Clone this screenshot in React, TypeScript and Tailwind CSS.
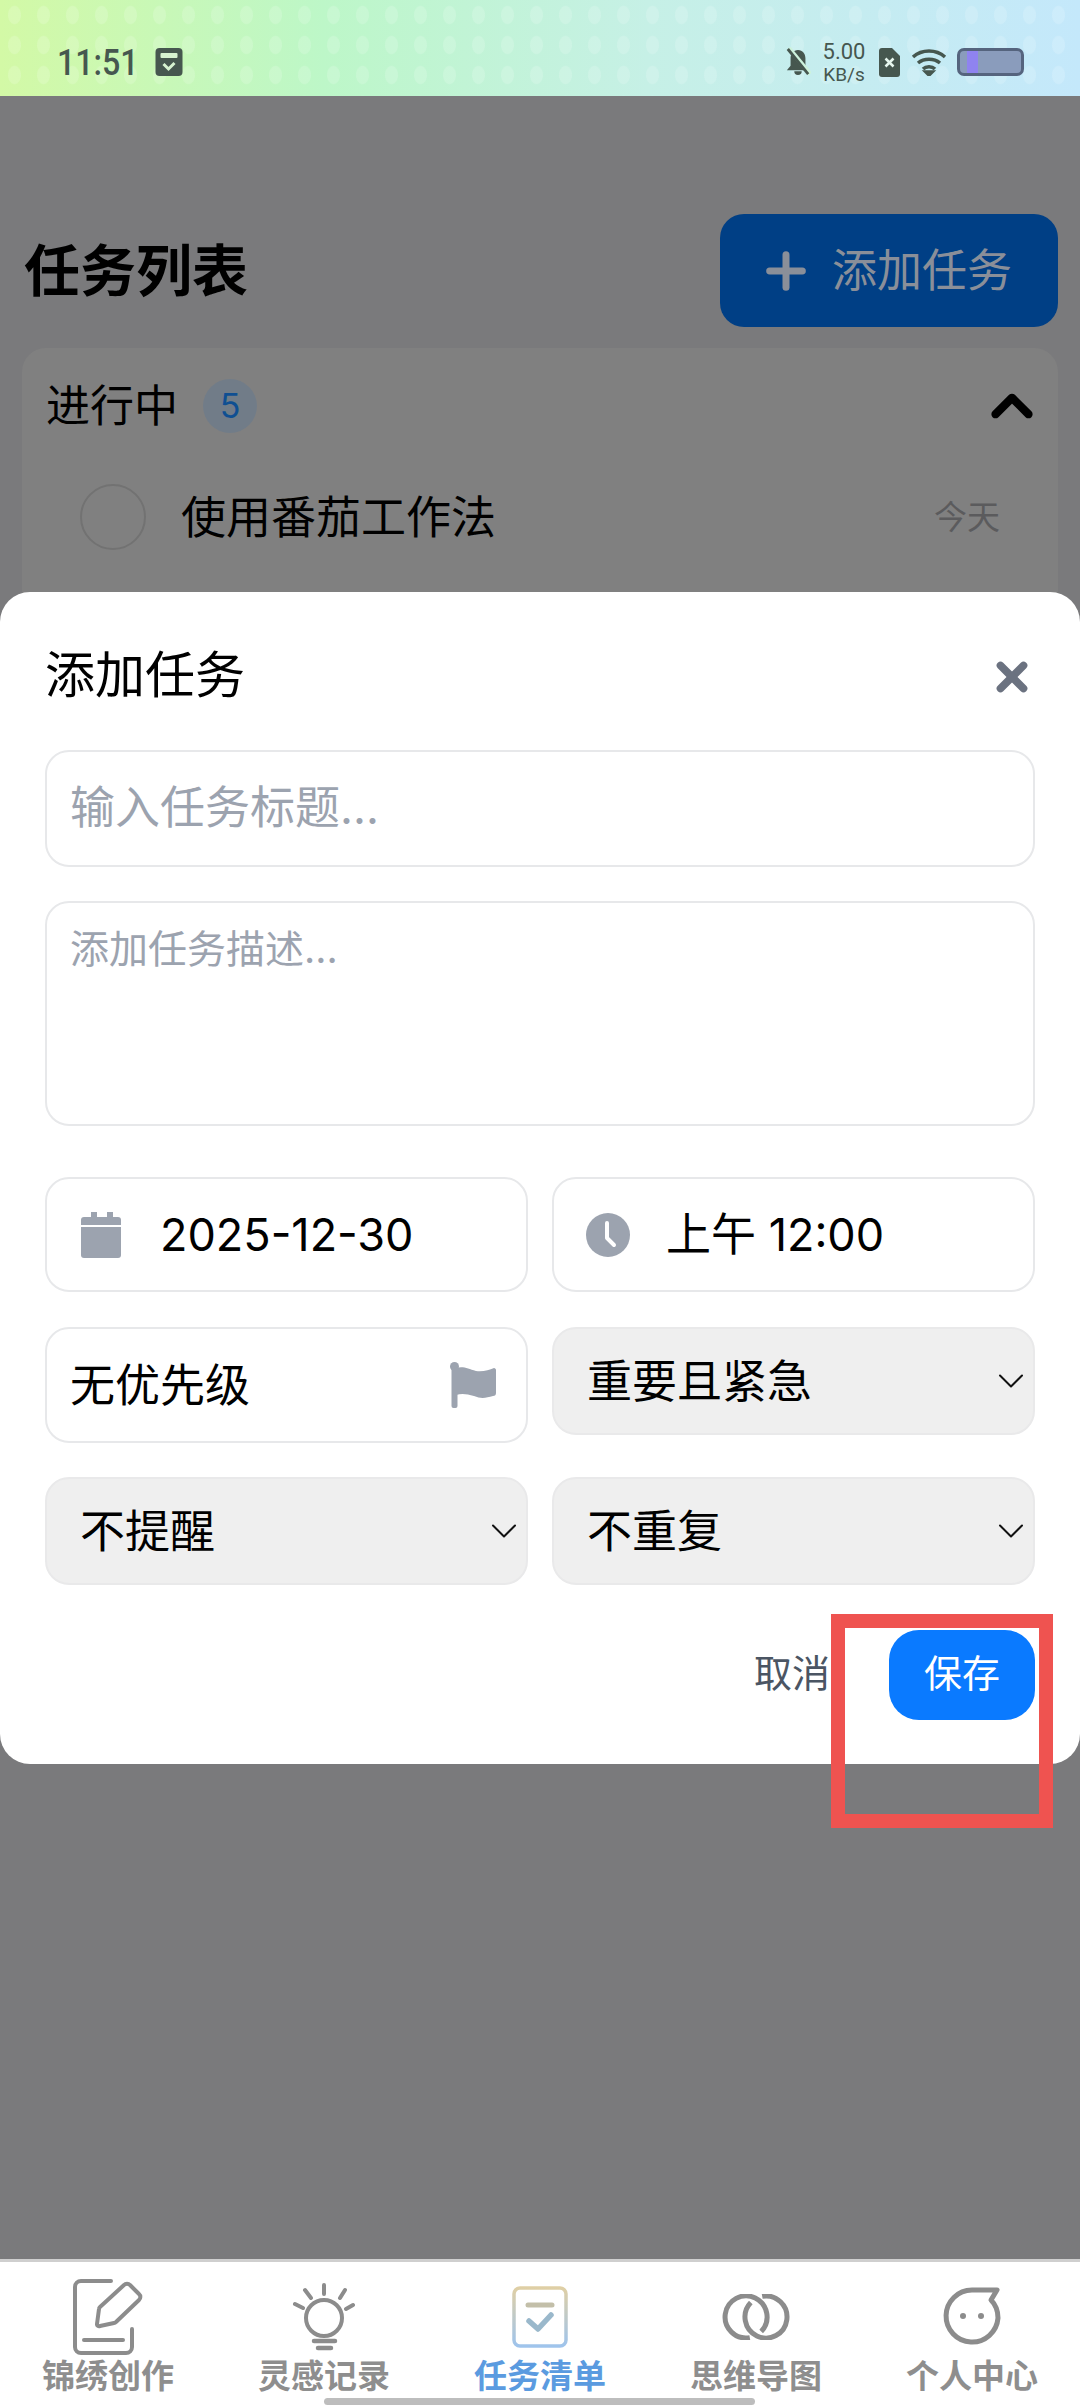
import { ChevronDown, ChevronUp, Plus, X } from 'lucide-react'
import type { ReactNode } from 'react'

const FONT = 'font-["Inter","Noto_Sans_CJK_SC",sans-serif]'

const StatusBar = () => (
    <div className="relative h-[96px] shrink-0 overflow-hidden bg-[linear-gradient(90deg,#d3f9a6_0%,#bdf7c8_30%,#c6f0e6_60%,#c4e8fb_100%)]">
        {/* 배경 물방울 패턴 */}
        <div className="absolute inset-0 bg-[radial-gradient(ellipse_10px_14px,rgba(255,255,255,0.16)_60%,transparent_70%)] bg-[size:29px_30px]" />
        <div className="relative flex h-full items-center pl-[57px] pr-[56px] pt-[28px] text-[#46574f]">
            <span className="origin-left scale-x-[0.87] font-['Roboto',sans-serif] text-[37px] font-medium leading-none">11:51</span>
            <svg className="ml-[4px]" width="28" height="28" viewBox="0 0 27 28">
                <rect width="27" height="28" rx="4" fill="#46574f" />
                <rect x="5" y="5" width="17" height="5" rx="1" fill="#d6f2d0" />
                <path d="M8 16l5 5 6-6" fill="none" stroke="#d6f2d0" strokeWidth="3" />
            </svg>
            <div className="ml-auto flex items-center">
                <svg width="26" height="30" viewBox="0 0 28 30">
                    <path d="M14 2c-5 0-8 4-8 9v8l-4 5h24l-4-5v-8c0-5-3-9-8-9zM10 25a4 4 0 0 0 8 0z" fill="#46574f" />
                    <path d="M4 0l23 28" stroke="#cdf2dc" strokeWidth="5" />
                    <path d="M3 1l22 27" stroke="#46574f" strokeWidth="3" />
                </svg>
                <div className="ml-[10px] flex w-[46px] flex-col items-center font-['Roboto',sans-serif] leading-none">
                    <span className="text-[22px]">5.00</span>
                    <span className="mt-[2px] text-[19px]">KB/s</span>
                </div>
                <svg className="ml-[12px]" width="21" height="29" viewBox="0 0 21 29">
                    <path d="M3 0h10l8 8v18a3 3 0 0 1-3 3H3a3 3 0 0 1-3-3V3a3 3 0 0 1 3-3z" fill="#46574f" />
                    <path d="M6.5 10.5l8 8M14.5 10.5l-8 8" stroke="#e6f6ee" strokeWidth="2.5" />
                </svg>
                <svg className="ml-[11px]" width="36" height="28" viewBox="0 0 36 28" fill="none" stroke="#46574f" strokeWidth="3.5">
                    <path d="M2 9c9-8 23-8 32 0" />
                    <path d="M7 15c6-5 16-5 22 0" />
                    <path d="M12 21c3-3 9-3 12 0" />
                    <path d="M15 24l3 3 3-3z" fill="#46574f" />
                </svg>
                <div className="ml-[10px] h-[28px] w-[67px] overflow-hidden rounded-[7px] border-[3px] border-[#55647e] bg-[#8a9cbc]">
                    <div className="ml-[7px] h-full w-[11px] bg-[#8f83f0]" />
                </div>
            </div>
        </div>
    </div>
)

const Field = ({ className, children }: { className: string; children: ReactNode }) => (
    <div className={`flex items-center rounded-[24px] border-2 border-[#e7e8ea] bg-white ${className}`}>{children}</div>
)

const SelectBox = ({ label, className }: { label: string; className: string }) => (
    <div className={`flex items-center justify-between rounded-[24px] border-2 border-[#e9e9ea] bg-[#efefef] pl-[33px] ${className}`}>
        <span className="text-[45px] leading-none text-black">{label}</span>
        <ChevronDown size={44} strokeWidth={1.1} color="#111" />
    </div>
)

const AddTaskModal = () => (
    <div className="absolute left-0 right-0 top-[592px] h-[1172px] rounded-[30px] bg-white px-[45px] pt-[52px]">
        <div className="flex h-[62px] items-center justify-between">
            <h2 className="text-[50px] font-normal leading-none text-black">添加任务</h2>
            <X size={46} strokeWidth={4} color="#6b7280" className="mt-[4px]" />
        </div>
        <Field className="mt-[44px] h-[117px] pb-[3px] pl-[23px]">
            <span className="text-[45px] leading-none text-[#9ca3af]">输入任务标题...</span>
        </Field>
        <Field className="mt-[34px] h-[225px] items-start pl-[23px] pt-[26px]">
            <span className="text-[39px] leading-none text-[#9ca3af]">添加任务描述...</span>
        </Field>
        <div className="mt-[51px] grid grid-cols-2 gap-x-[24px]">
            <Field className="h-[115px] pl-[34px]">
                <svg width="40" height="46" viewBox="0 0 40 46" fill="#9ca3af">
                    <path d="M10 0h6v6h-6zM26 0h6v6h-6z" />
                    <path d="M3 5h34a3 3 0 0 1 3 3v5H0V8a3 3 0 0 1 3-3z" />
                    <path d="M0 15h40v28a3 3 0 0 1-3 3H3a3 3 0 0 1-3-3z" />
                </svg>
                <span className="ml-[39px] text-[45px] leading-none text-black">2025-12-30</span>
            </Field>
            <Field className="h-[115px] pl-[32px]">
                <svg width="44" height="44" viewBox="0 0 44 44">
                    <circle cx="22" cy="22" r="22" fill="#9ca3af" />
                    <path d="M21 10v15l7 7" fill="none" stroke="#fff" strokeWidth="4" strokeLinecap="round" strokeLinejoin="round" />
                </svg>
                <span className="ml-[36px] text-[45px] leading-none text-black">上午 12:00</span>
            </Field>
        </div>
        <div className="mt-[35px] grid grid-cols-2 items-start gap-x-[24px]">
            <Field className="h-[116px] justify-between pl-[23px] pr-[30px]">
                <span className="text-[45px] leading-none text-black">无优先级</span>
                <svg width="46" height="46" viewBox="0 0 46 46" fill="#9ca3af">
                    <circle cx="4.5" cy="4.5" r="4.5" />
                    <rect x="1.5" y="4" width="6" height="42" rx="2" />
                    <path d="M6 6c8-2 12 1 20 3 7 1 13-1 18-3 1 0 2 1 2 2v23c0 2-1 3-3 3-7 2-12 3-19 0-7-2-12-3-18-1z" />
                </svg>
            </Field>
            <SelectBox label="重要且紧急" className="h-[108px]" />
        </div>
        <div className="mt-[34px] grid grid-cols-2 gap-x-[24px]">
            <SelectBox label="不提醒" className="h-[108px]" />
            <SelectBox label="不重复" className="h-[108px]" />
        </div>
        <div className="mt-[45px] flex items-center justify-end">
            <span className="pb-[4px] text-[38px] leading-none text-[#4b5563]">取消</span>
            <div className="ml-[59px] flex h-[90px] w-[146px] items-center justify-center rounded-[30px] bg-[#0a7aff] pb-[4px] text-[38px] leading-none text-white">
                保存
            </div>
        </div>
    </div>
)

const NAV_ITEMS: { label: string; active?: boolean; icon: ReactNode }[] = [
    {
        label: '锦绣创作',
        icon: (
            <svg width="70" height="76" viewBox="0 0 70 76" fill="none" stroke="#8c8c8c" strokeWidth="4" strokeLinecap="round" strokeLinejoin="round">
                <path d="M38 2H8a6 6 0 0 0-6 6v60a6 6 0 0 0 6 6h45a6 6 0 0 0 6-6V50" />
                <path d="M11 61h39" />
                <path d="M51 6a4 4 0 0 1 6 0l9 9a4 4 0 0 1 0 6L43 43a3 3 0 0 1-2 1l-14 3a2 2 0 0 1-3-2l2-15a3 3 0 0 1 1-2z" />
            </svg>
        ),
    },
    {
        label: '灵感记录',
        icon: (
            <svg width="64" height="68" viewBox="0 0 64 68" fill="none" stroke="#8c8c8c" strokeWidth="4" strokeLinecap="round">
                <circle cx="32" cy="35" r="18" />
                <path d="M32 2v9M13 7l6 8M53 7l-5 8M3 21l8 4M61 22l-7 4" />
                <path d="M22 58h21M26 65h13" strokeWidth="4.5" />
            </svg>
        ),
    },
    {
        label: '任务清单',
        active: true,
        icon: (
            <svg width="56" height="62" viewBox="0 0 56 62" fill="none" strokeLinecap="round" strokeLinejoin="round">
                <defs>
                    <linearGradient id="task-icon" x1="0" y1="0" x2="0" y2="1">
                        <stop offset="0" stopColor="#dfcfa5" />
                        <stop offset="1" stopColor="#9fc4ec" />
                    </linearGradient>
                </defs>
                <rect x="2" y="2" width="52" height="58" rx="6" stroke="url(#task-icon)" strokeWidth="3.5" />
                <path d="M16 19h24" stroke="#c3bfa9" strokeWidth="5" />
                <path d="M17 35l9 8 13-14" stroke="#9ab8cb" strokeWidth="5.5" />
            </svg>
        ),
    },
    {
        label: '思维导图',
        icon: (
            <svg width="68" height="46" viewBox="0 0 68 46" fill="none" stroke="#8c8c8c" strokeWidth="5">
                <path d="M27.8 43.6A21 21 0 1 1 39.2 37.5" />
                <path d="M40.2 2.35A21 21 0 1 1 28.8 8.5" />
            </svg>
        ),
    },
    {
        label: '个人中心',
        icon: (
            <svg width="58" height="60" viewBox="0 0 58 60" fill="none" stroke="#8c8c8c" strokeWidth="5" strokeLinejoin="round">
                <path d="M54 3H29A26 26 0 1 0 55 31c0-7-2-13-7-18z" />
                <circle cx="20" cy="29" r="3" fill="#8c8c8c" stroke="none" />
                <circle cx="38" cy="29" r="3" fill="#8c8c8c" stroke="none" />
            </svg>
        ),
    },
]

const BottomNav = () => (
    <nav className="relative h-[149px] shrink-0 border-t-[3px] border-[#cfcfcf] bg-white">
        <div className="grid grid-cols-5 pt-[12px]">
            {NAV_ITEMS.map((item) => (
                <div key={item.label} className="flex flex-col items-center">
                    <div className="flex h-[86px] items-center justify-center">{item.icon}</div>
                    <span className={`text-[33px] font-bold leading-none ${item.active ? 'text-[#5b9be0]' : 'text-[#8e8e8e]'}`}>
                        {item.label}
                    </span>
                </div>
            ))}
        </div>
        <div className="absolute bottom-[3px] left-[324px] h-[7px] w-[431px] rounded-full bg-[#bdbdbd]" />
    </nav>
)

const App = () => (
    <div className={`relative flex h-[2408px] w-[1080px] flex-col overflow-hidden bg-[#7a7a7c] ${FONT}`}>
        <StatusBar />
        <main className="flex-1 px-[22px]">
            <div className="mt-[118px] flex h-[113px] items-center justify-between">
                <h1 className="ml-[2px] text-[56px] font-bold leading-none text-black">任务列表</h1>
                <div className="flex h-full w-[338px] items-center justify-center rounded-[24px] bg-[#003f85] pr-[8px] text-[#8a8f99]">
                    <Plus size={56} strokeWidth={3} />
                    <span className="ml-[18px] text-[45px] leading-none">添加任务</span>
                </div>
            </div>
            <section className="mt-[21px] h-[600px] rounded-t-[24px] bg-[#808080] px-[24px]">
                <div className="flex h-[112px] items-center justify-between pt-[4px]">
                    <div className="flex items-center">
                        <span className="text-[44px] leading-none text-black">进行中</span>
                        <span className="ml-[25px] flex size-[54px] items-center justify-center rounded-full bg-[#717c88] text-[34px] leading-none text-[#0f4f92]">
                            5
                        </span>
                    </div>
                    <ChevronUp size={66} strokeWidth={3} color="#000" className="mr-[-11px]" />
                </div>
                <div className="mt-[12px] flex h-[90px] items-center pl-[34px] pr-[34px]">
                    <span className="size-[66px] rounded-full border-2 border-[#727272]" />
                    <span className="ml-[35px] text-[45px] leading-none text-black">使用番茄工作法</span>
                    <span className="ml-auto text-[33px] leading-none text-[#5b5b5d]">今天</span>
                </div>
            </section>
        </main>
        <BottomNav />
        <AddTaskModal />
        {/* 강조 표시 박스 */}
        <div className="absolute left-[831px] top-[1614px] h-[214px] w-[222px] border-[14px] border-[#ef5350]" />
    </div>
)

export default App
